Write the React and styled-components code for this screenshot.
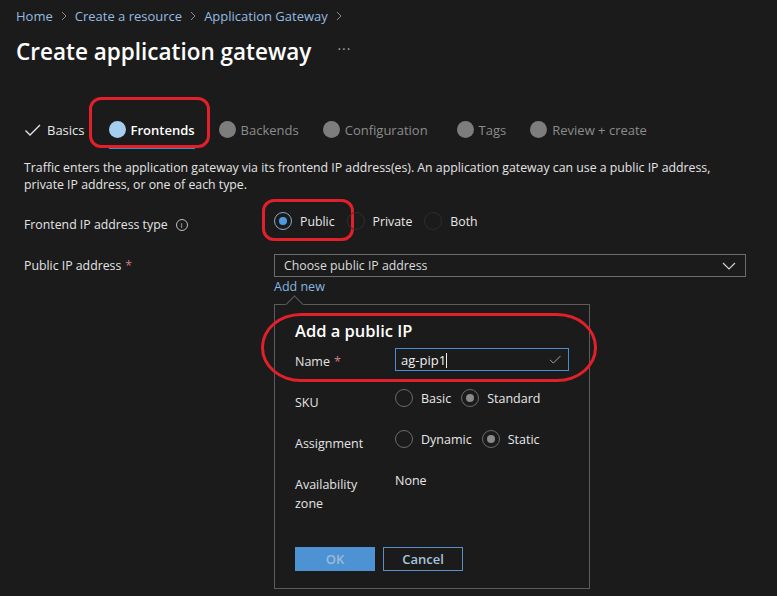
import React from "react";
import styled, { createGlobalStyle } from "styled-components";

const GlobalStyle = createGlobalStyle`
  html, body {
    margin: 0;
    padding: 0;
    background: #1b1b1b;
  }
  * {
    box-sizing: border-box;
  }
`;

const Page = styled.div`
  width: 777px;
  height: 596px;
  overflow: hidden;
  background: #1b1b1b;
  color: #e8e8e8;
  font-family: "Open Sans", "Noto Sans", sans-serif;
  font-size: 13px;
`;

const Header = styled.header`
  padding: 6px 16px 0 16px;
`;

const Breadcrumb = styled.nav`
  display: flex;
  align-items: center;
  gap: 7px;
  height: 20px;
  color: #93bbe0;
  font-size: 13px;
`;

const Crumb = styled.span`
  white-space: nowrap;
`;

const TitleRow = styled.div`
  display: flex;
  align-items: center;
  gap: 26px;
  margin-top: 10px;
`;

const Title = styled.h1`
  margin: 0;
  font-size: 22.5px;
  font-weight: 600;
  color: #ffffff;
`;

const More = styled.span`
  color: #a0a0a0;
  font-size: 14px;
  letter-spacing: 1px;
  margin-top: -6px;
`;

const Tabs = styled.div`
  display: flex;
  align-items: stretch;
  gap: 24px;
  margin-top: 44px;
`;

const Tab = styled.div`
  display: flex;
  align-items: center;
  gap: 5px;
  height: 38px;
  padding-top: 2px;
  margin-left: ${(p) => p.$shift || 0}px;
  border-bottom: 3px solid ${(p) => (p.$active ? "#3f8ccb" : "transparent")};
  color: ${(p) => (p.$active ? "#ffffff" : p.$done ? "#e8e8e8" : "#8c8c8c")};
  font-weight: ${(p) => (p.$active ? 600 : 400)};
  white-space: nowrap;
`;

const Dot = styled.span`
  width: 17px;
  height: 17px;
  border-radius: 50%;
  background: ${(p) => (p.$active ? "#a5cdef" : "#7d7d7d")};
  flex: none;
`;

const Mark = styled.div`
  position: relative;
  &::after {
    content: "";
    position: absolute;
    top: ${(p) => p.$t}px;
    left: ${(p) => p.$l}px;
    right: ${(p) => p.$r}px;
    bottom: ${(p) => p.$b}px;
    border: 3px solid #e1202c;
    border-radius: ${(p) => p.$radius || "12px"};
    pointer-events: none;
  }
`;

const Content = styled.main`
  padding: 0 31px 0 24px;
`;

const Intro = styled.p`
  margin: 10px 0 0 0;
  font-size: 12.3px;
  line-height: 17px;
  color: #e4e4e4;
`;

const FormGrid = styled.div`
  display: grid;
  grid-template-columns: 250px 472px;
  align-items: start;
  margin-top: 19px;
  row-gap: 21px;
  font-size: 12.3px;
`;

const Label = styled.div`
  display: flex;
  align-items: center;
  padding-top: ${(p) => p.$pt || 0}px;
  color: #e4e4e4;
  white-space: nowrap;
`;

const Req = styled.span`
  color: #d27a8a;
  margin-left: 4px;
`;

const InfoIcon = styled.span`
  display: inline-flex;
  align-items: center;
  justify-content: center;
  width: 12px;
  height: 12px;
  margin-left: 8px;
  border: 1px solid #bdbdbd;
  border-radius: 50%;
  font-size: 8px;
  line-height: 1;
  color: #cfcfcf;
`;

const RadioGroup = styled.div`
  display: flex;
  align-items: center;
  gap: ${(p) => p.$gap || 12}px;
`;

const RadioOption = styled.label`
  display: flex;
  align-items: center;
  gap: 8px;
  color: #e8e8e8;
  white-space: nowrap;
`;

const Radio = styled.span`
  position: relative;
  width: 18px;
  height: 18px;
  border-radius: 50%;
  border: 1px solid ${(p) => p.$border || "#6a6a6a"};
  flex: none;
  &::after {
    content: "";
    display: ${(p) => (p.$checked ? "block" : "none")};
    position: absolute;
    top: 50%;
    left: 50%;
    width: 8px;
    height: 8px;
    margin: -4px 0 0 -4px;
    border-radius: 50%;
    background: ${(p) => p.$dot || "#8a8a8a"};
  }
`;

const Control = styled.div`
  display: flex;
  flex-direction: column;
  align-items: flex-start;
`;

const Select = styled.div`
  display: flex;
  align-items: center;
  justify-content: space-between;
  width: 472px;
  height: 23px;
  padding: 0 9px;
  border: 1px solid #6c6c6c;
  color: #dcdcdc;
`;

const Link = styled.span`
  margin-top: 1px;
  color: #86b5e0;
  font-size: 12.5px;
`;

const Callout = styled.section`
  position: relative;
  width: 316px;
  height: 285px;
  margin-top: 9px;
  padding: 14px 20px 0 20px;
  border: 1px solid #5b5b5b;
  background: #1b1b1b;
  &::before {
    content: "";
    position: absolute;
    top: -7px;
    left: 13px;
    width: 12px;
    height: 12px;
    background: #1b1b1b;
    border-left: 1px solid #5b5b5b;
    border-top: 1px solid #5b5b5b;
    transform: rotate(45deg);
  }
`;

const CalloutTitle = styled.h2`
  margin: 0;
  font-size: 16.5px;
  font-weight: 600;
  color: #ffffff;
`;

const PanelGrid = styled.div`
  display: grid;
  grid-template-columns: 100px 174px;
  align-items: start;
  margin-top: ${(p) => p.$mt || 6}px;
`;

const PanelLabel = styled.div`
  color: #e4e4e4;
  font-size: 12.5px;
  line-height: 19px;
  padding-top: ${(p) => p.$pt || 0}px;
  height: ${(p) => p.$h}px;
`;

const PanelField = styled.div`
  height: ${(p) => p.$h}px;
  padding-top: ${(p) => p.$pt || 0}px;
  font-size: 12.5px;
`;

const TextInput = styled.div`
  display: flex;
  align-items: center;
  justify-content: space-between;
  width: 174px;
  height: 23px;
  padding: 0 6px 0 5px;
  border: 1px solid #4a8fcc;
  color: #f0f0f0;
  font-size: 13px;
`;

const Caret = styled.span`
  display: inline-block;
  width: 1px;
  height: 15px;
  background: #f0f0f0;
  vertical-align: -3px;
`;

const Buttons = styled.div`
  display: flex;
  gap: 8px;
`;

const Button = styled.button`
  width: 80px;
  height: 24px;
  padding: 0;
  font-family: inherit;
  font-size: 13px;
  font-weight: 600;
  border: 1px solid ${(p) => (p.$primary ? "#4d93d4" : "#5b90c6")};
  background: ${(p) => (p.$primary ? "#4d93d4" : "transparent")};
  color: ${(p) => (p.$primary ? "#9dbad6" : "#a9c4de")};
`;

const Chevron = () => (
  <svg width="8" height="10" viewBox="0 0 8 10">
    <path d="M2 1l4 4-4 4" fill="none" stroke="#8a8a8a" strokeWidth="1" />
  </svg>
);

const Check = ({ color = "#e8e8e8", size = 18 }) => (
  <svg width={size} height={size} viewBox="0 0 18 18">
    <path d="M1.5 9.5l4.5 4.5 10-10" fill="none" stroke={color} strokeWidth="1.3" />
  </svg>
);

const Down = () => (
  <svg width="14" height="8" viewBox="0 0 14 8">
    <path d="M1 1l6 6 6-6" fill="none" stroke="#d0d0d0" strokeWidth="1.2" />
  </svg>
);

const tabs = [
  { name: "Backends", shift: 0 },
  { name: "Configuration", shift: 0 },
  { name: "Tags", shift: 5 },
  { name: "Review + create", shift: 0 },
];

export default function App() {
  return (
    <Page>
      <GlobalStyle />
      <Header>
        <Breadcrumb>
          <Crumb>Home</Crumb>
          <Chevron />
          <Crumb>Create a resource</Crumb>
          <Chevron />
          <Crumb>Application Gateway</Crumb>
          <Chevron />
        </Breadcrumb>
        <TitleRow>
          <Title>Create application gateway</Title>
          <More>···</More>
        </TitleRow>
      </Header>

      <Content>
        <Tabs>
          <Tab $done>
            <Check size={18} />
            Basics
          </Tab>
          <Mark $t={-14} $l={-20} $r={-15} $b={1}>
            <Tab $active>
              <Dot $active />
              Frontends
            </Tab>
          </Mark>
          {tabs.map((t) => (
            <Tab key={t.name} $shift={t.shift}>
              <Dot />
              {t.name}
            </Tab>
          ))}
        </Tabs>

        <Intro>
          Traffic enters the application gateway via its frontend IP address(es). An application gateway can use a public IP address,
          <br />
          private IP address, or one of each type.
        </Intro>

        <FormGrid>
          <Label $pt={4}>
            Frontend IP address type
            <InfoIcon>i</InfoIcon>
          </Label>
          <RadioGroup>
            <Mark $t={-13} $l={-12} $r={-19} $b={-11}>
              <RadioOption>
                <Radio $checked $border="#8aa9c6" $dot="#4c9be2" />
                Public
              </RadioOption>
            </Mark>
            <RadioOption>
              <Radio $border="#2e2e2e" />
              Private
            </RadioOption>
            <RadioOption>
              <Radio $border="#2e2e2e" />
              Both
            </RadioOption>
          </RadioGroup>

          <Label $pt={3}>
            Public IP address
            <Req>*</Req>
          </Label>
          <Control>
            <Select>
              Choose public IP address
              <Down />
            </Select>
            <Link>Add new</Link>
            <Callout>
              <Mark $t={-6} $l={-34} $r={-28} $b={-6} $radius="40px / 34px">
                <CalloutTitle>Add a public IP</CalloutTitle>
                <PanelGrid>
                  <PanelLabel $pt={4} $h={28}>
                    Name
                    <Req>*</Req>
                  </PanelLabel>
                  <PanelField $h={28}>
                    <TextInput>
                      <span>
                        ag-pip1
                        <Caret />
                      </span>
                      <Check color="#9fb49a" size={13} />
                    </TextInput>
                  </PanelField>
                </PanelGrid>
              </Mark>
              <PanelGrid $mt={13}>
                <PanelLabel $pt={4} $h={41}>SKU</PanelLabel>
                <PanelField $h={41}>
                  <RadioGroup $gap={10}>
                    <RadioOption>
                      <Radio />
                      Basic
                    </RadioOption>
                    <RadioOption>
                      <Radio $checked />
                      Standard
                    </RadioOption>
                  </RadioGroup>
                </PanelField>
                <PanelLabel $pt={4} $h={41}>Assignment</PanelLabel>
                <PanelField $h={41}>
                  <RadioGroup $gap={10}>
                    <RadioOption>
                      <Radio />
                      Dynamic
                    </RadioOption>
                    <RadioOption>
                      <Radio $checked />
                      Static
                    </RadioOption>
                  </RadioGroup>
                </PanelField>
                <PanelLabel $pt={4} $h={76}>
                  Availability
                  <br />
                  zone
                </PanelLabel>
                <PanelField $pt={1} $h={76}>None</PanelField>
              </PanelGrid>
              <Buttons>
                <Button $primary>OK</Button>
                <Button>Cancel</Button>
              </Buttons>
            </Callout>
          </Control>
        </FormGrid>
      </Content>
    </Page>
  );
}
